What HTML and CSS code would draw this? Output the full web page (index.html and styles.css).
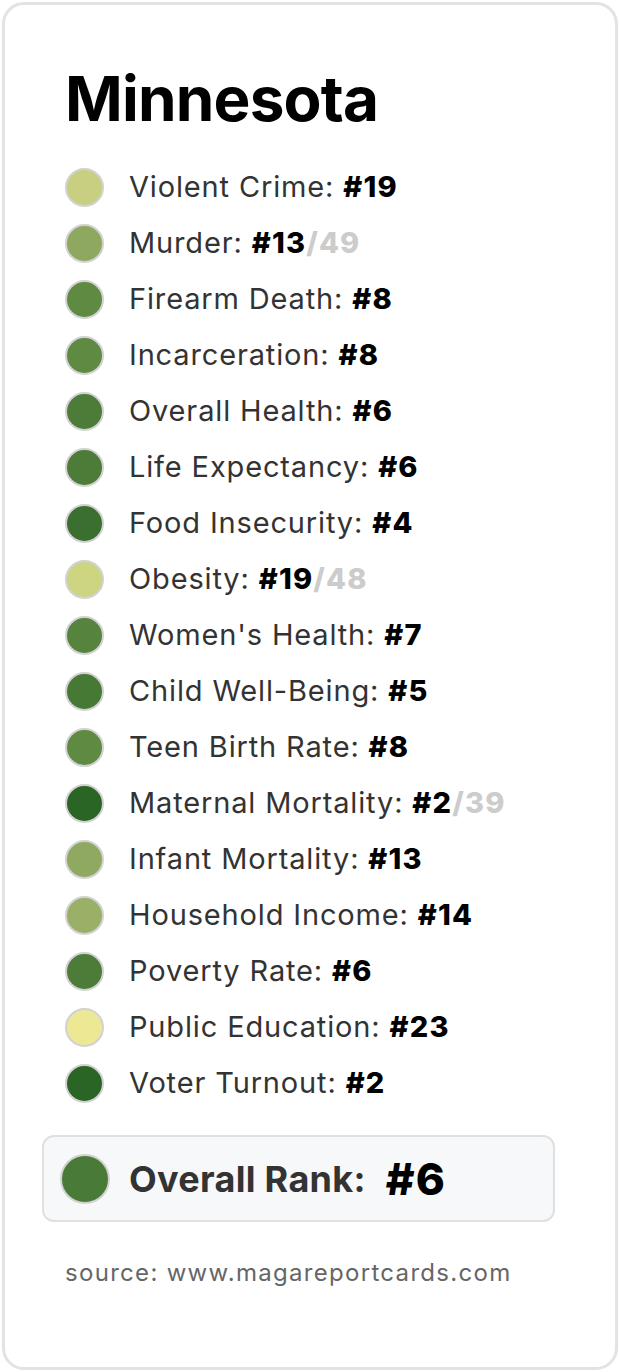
FILE: index.html
```html
<!DOCTYPE html>
<html lang="en">
<head>
<meta charset="utf-8">
<title>Minnesota</title>
<link rel="stylesheet" href="styles.css">
</head>
<body>
<div class="card">
  <h1 class="title">Minnesota</h1>
  <ul class="list">
    <li class="row"><span class="dot" style="background:#c8cf80"></span><span class="label">Violent Crime: <b>#19</b></span></li>
    <li class="row"><span class="dot" style="background:#8ea95f"></span><span class="label">Murder: <b>#13</b><span class="of">/49</span></span></li>
    <li class="row"><span class="dot" style="background:#5f8a42"></span><span class="label">Firearm Death: <b>#8</b></span></li>
    <li class="row"><span class="dot" style="background:#5f8a42"></span><span class="label">Incarceration: <b>#8</b></span></li>
    <li class="row"><span class="dot" style="background:#4c7c38"></span><span class="label">Overall Health: <b>#6</b></span></li>
    <li class="row"><span class="dot" style="background:#4c7c38"></span><span class="label">Life Expectancy: <b>#6</b></span></li>
    <li class="row"><span class="dot" style="background:#3b6f30"></span><span class="label">Food Insecurity: <b>#4</b></span></li>
    <li class="row"><span class="dot" style="background:#cdd581"></span><span class="label">Obesity: <b>#19</b><span class="of">/48</span></span></li>
    <li class="row"><span class="dot" style="background:#56833e"></span><span class="label">Women's Health: <b>#7</b></span></li>
    <li class="row"><span class="dot" style="background:#467934"></span><span class="label">Child Well-Being: <b>#5</b></span></li>
    <li class="row"><span class="dot" style="background:#5f8a42"></span><span class="label">Teen Birth Rate: <b>#8</b></span></li>
    <li class="row"><span class="dot" style="background:#2b6526"></span><span class="label">Maternal Mortality: <b>#2</b><span class="of">/39</span></span></li>
    <li class="row"><span class="dot" style="background:#8fa960"></span><span class="label">Infant Mortality: <b>#13</b></span></li>
    <li class="row"><span class="dot" style="background:#99b066"></span><span class="label">Household Income: <b>#14</b></span></li>
    <li class="row"><span class="dot" style="background:#4c7c38"></span><span class="label">Poverty Rate: <b>#6</b></span></li>
    <li class="row"><span class="dot" style="background:#ede894"></span><span class="label">Public Education: <b>#23</b></span></li>
    <li class="row"><span class="dot" style="background:#2b6526"></span><span class="label">Voter Turnout: <b>#2</b></span></li>
  </ul>
  <div class="overall">
    <span class="dot big" style="background:#4a7a38"></span>
    <span class="overall-label">Overall Rank:</span>
    <span class="overall-rank">#6</span>
  </div>
  <p class="source">source: www.magareportcards.com</p>
</div>
</body>
</html>
```

FILE: styles.css
```css
html, body {
  margin: 0;
  padding: 0;
  background: #ffffff;
}
body {
  padding: 2px;
  font-family: Inter, "Noto Sans", "Liberation Sans", sans-serif;
}
.card {
  box-sizing: border-box;
  height: 1368px;
  border: 3px solid #e3e3e3;
  border-radius: 22px;
  padding: 57px 60px 0 37px;
  background: #fff;
}
.title {
  margin: 0 0 23px 23px;
  font-size: 62px;
  line-height: 74px;
  font-weight: 700;
  color: #000;
  letter-spacing: -0.8px;
}
.list {
  list-style: none;
  margin: 0 0 0 23px;
  padding: 0;
}
.row {
  display: flex;
  align-items: center;
  height: 56px;
  gap: 25px;
}
.dot {
  box-sizing: border-box;
  flex: none;
  width: 39px;
  height: 39px;
  border-radius: 50%;
  border: 2px solid #d2d2d2;
}
.label {
  font-size: 29px;
  line-height: 56px;
  color: #333;
  letter-spacing: 0.85px;
}
.label b {
  font-weight: 800;
  color: #000;
  letter-spacing: 1.2px;
}
.of {
  font-weight: 800;
  color: #cccccc;
  letter-spacing: 1.2px;
}
.overall {
  margin-top: 24px;
  box-sizing: border-box;
  height: 87px;
  border: 2px solid #e0e0e0;
  border-radius: 12px;
  background: #f7f8fa;
  display: flex;
  align-items: center;
  padding-left: 16px;
}
.dot.big {
  width: 50px;
  height: 50px;
  margin-right: 19px;
}
.overall-label {
  font-size: 36px;
  font-weight: 700;
  color: #333;
  margin-right: 20px;
  letter-spacing: 0.3px;
}
.overall-rank {
  font-size: 44px;
  font-weight: 800;
  color: #000;
  letter-spacing: 1px;
}
.source {
  margin: 36px 0 0 23px;
  font-size: 24px;
  line-height: 30px;
  color: #666;
  letter-spacing: 1.3px;
}
```
